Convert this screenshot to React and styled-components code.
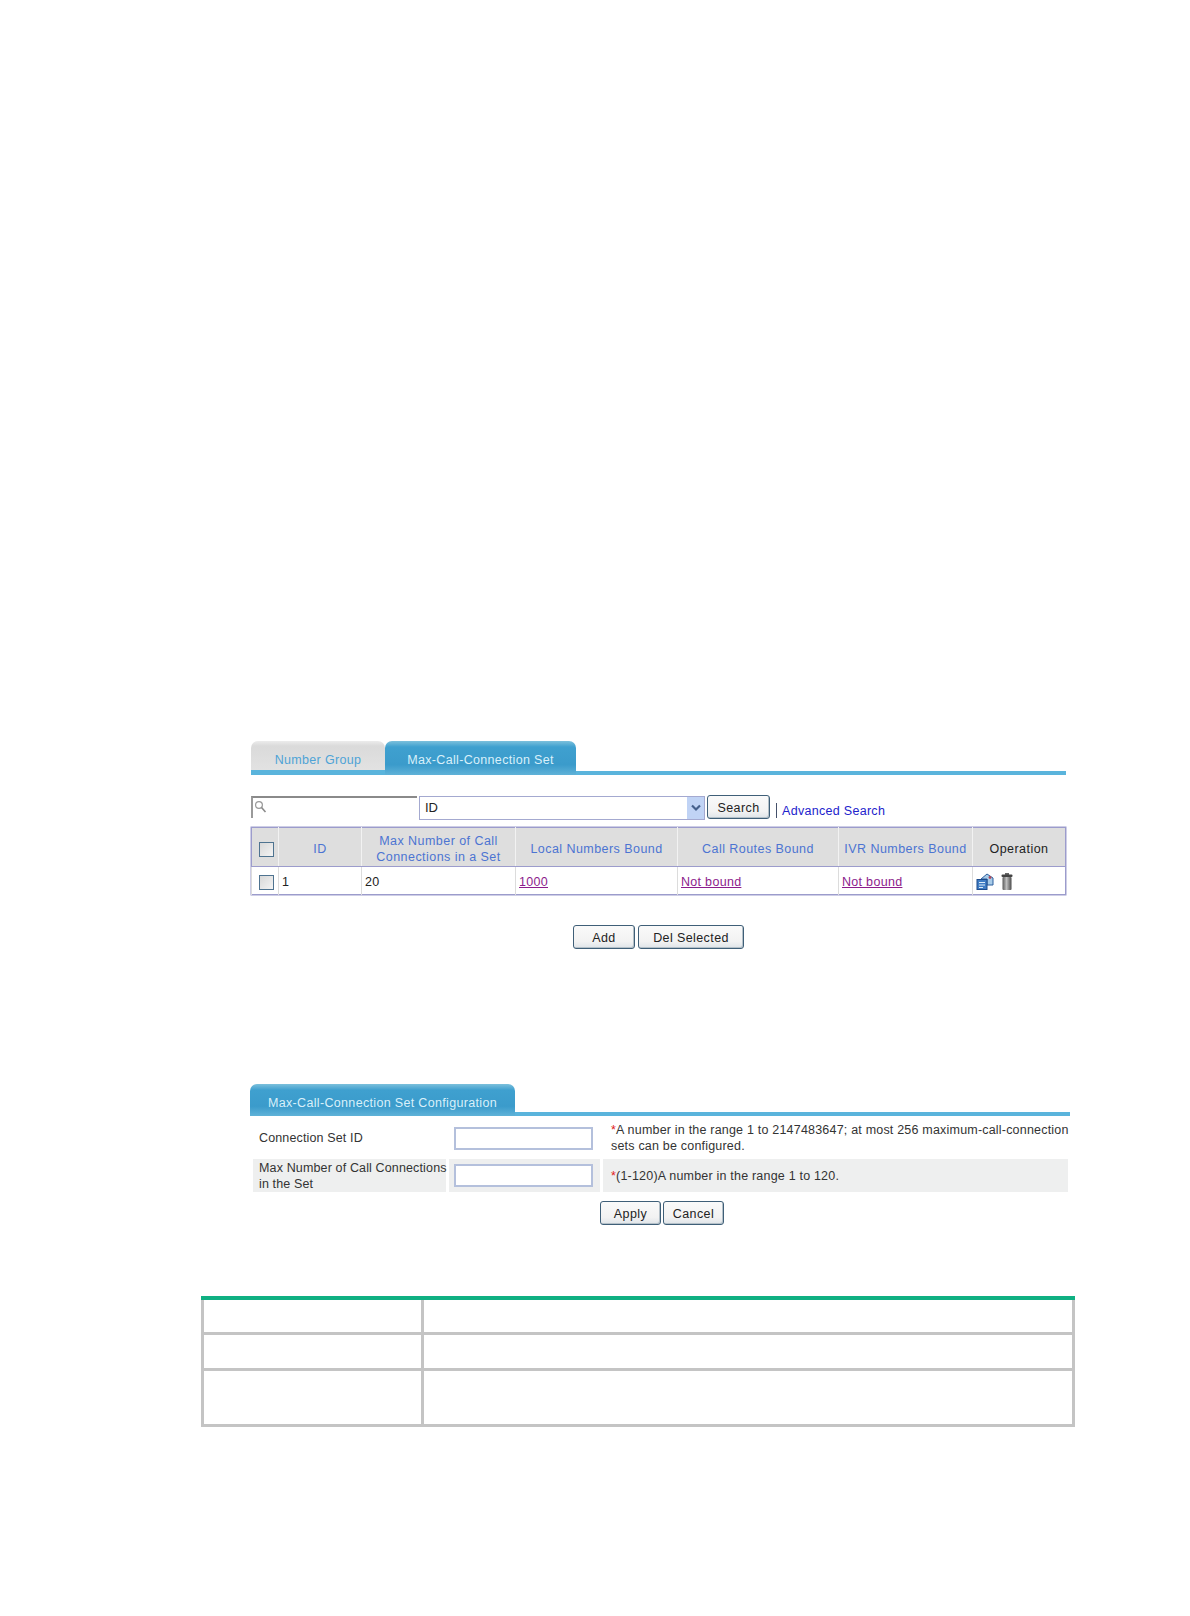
import React from 'react';
import styled, { createGlobalStyle } from 'styled-components';

const Global = createGlobalStyle`
  html, body { margin: 0; padding: 0; background: #fff; }
  body { font-family: "Liberation Sans", Arial, sans-serif; font-size: 12px; color: #222; }
`;

const Page = styled.div`
  width: 1190px;
  height: 1616px;
  padding-top: 741px;
  box-sizing: border-box;
  overflow: hidden;
`;

const Shot = styled.section`
  margin-left: ${(p) => p.left}px;
  margin-top: ${(p) => p.top || 0}px;
  width: ${(p) => p.width}px;
`;

const TabBar = styled.div`
  display: flex;
  align-items: flex-end;
  height: ${(p) => p.height}px;
  border-bottom: 4px solid #5ab4dc;
`;

const Tab = styled.div`
  width: ${(p) => p.width}px;
  height: ${(p) => p.height}px;
  margin-bottom: -4px;
  box-sizing: border-box;
  padding-top: ${(p) => p.pad}px;
  text-align: center;
  font-size: 12.5px;
  letter-spacing: 0.33px;
  border-radius: 7px 7px 0 0;
  color: ${(p) => (p.active ? '#d9f0fa' : '#4ea3d6')};
  background: ${(p) =>
    p.active
      ? 'linear-gradient(#7cc0dc 0, #3fa0cf 6px, #3b9bcb 70%, #5fb2d8 100%)'
      : 'linear-gradient(#ececec 0, #dadada 5px, #e2e2e2 85%, #5ab4dc 85%)'};
`;

const SearchRow = styled.div`
  display: flex;
  align-items: flex-start;
  margin-top: 20px;
  height: 32px;
`;

const SearchBox = styled.div`
  width: 166px;
  height: 22px;
  margin-top: 1px;
  box-sizing: border-box;
  border-top: 2px solid #8a8a8a;
  border-left: 2px solid #9a9a9a;
  padding: 2px 0 0 1px;
  svg { display: block; }
`;

const SelectBox = styled.div`
  display: flex;
  justify-content: space-between;
  width: 286px;
  height: 24px;
  margin: 1px 0 0 2px;
  box-sizing: border-box;
  border: 1px solid #a4a9d0;
  padding-left: 5px;
  line-height: 22px;
  font-size: 13px;
`;

const SelectArrow = styled.span`
  display: flex;
  align-items: center;
  justify-content: center;
  width: 17px;
  background: #c0d3f5;
`;

const Btn = styled.div`
  width: ${(p) => p.width}px;
  height: 24px;
  margin-left: ${(p) => p.gap || 0}px;
  box-sizing: border-box;
  border: 1px solid #3f5f78;
  border-radius: 3px;
  background: linear-gradient(#fafafa, #f2f2f2 70%, #dfe4e8);
  box-shadow: inset -1px -1px 0 #b4c0c8;
  text-align: center;
  line-height: 25px;
  font-size: 12.5px;
  letter-spacing: 0.4px;
  color: #222;
`;

const Sep = styled.span`
  width: 1px;
  height: 15px;
  margin: 8px 5px 0 6px;
  background: #44506a;
`;

const Advanced = styled.a`
  margin-top: 9px;
  color: #2222cc;
  font-size: 12.5px;
  letter-spacing: 0.3px;
  line-height: 15px;
`;

const DataTable = styled.table`
  width: 814px;
  table-layout: fixed;
  border-collapse: collapse;
  border: 1px solid #9c9ccc;
  box-shadow: 0 0 0 0.5px #9c9ccc;
`;

const Head = styled.th`
  height: 39px;
  box-sizing: border-box;
  padding: 4px 0 0 ${(p) => (p.first ? 2 : 0)}px;
  background: #dedede;
  border-left: 1px solid ${(p) => (p.first ? '#9c9ccc' : '#f2f2f2')};
  border-bottom: 1px solid #9c9ccc;
  font-weight: normal;
  font-size: 12.5px;
  letter-spacing: 0.45px;
  line-height: 16px;
  color: ${(p) => (p.plain ? '#222' : '#4c74d2')};
`;

const Cell = styled.td`
  height: 24px;
  padding: 3px 0 0 ${(p) => (p.tight ? 2 : 3)}px;
  border-left: 1px solid #dcdcdc;
  font-size: 12.5px;
  letter-spacing: 0.3px;
  vertical-align: middle;
`;

const Bound = styled.a`
  color: #8c1c8c;
  text-decoration: underline;
`;

const Check = styled.span`
  display: block;
  box-sizing: border-box;
  width: 15px;
  height: 15px;
  margin: 0 auto;
  border: 1px solid #4e7390;
  background: linear-gradient(135deg, #d8d8d8, #f4f4f4);
`;

const Ops = styled.div`
  display: flex;
  align-items: center;
  gap: 7px;
  margin-top: -2px;
  svg { display: block; }
`;

const Actions = styled.div`
  display: flex;
  justify-content: center;
  margin-top: ${(p) => p.top}px;
  padding-left: ${(p) => p.shift}px;
`;

const FormRow = styled.div`
  display: grid;
  grid-template-columns: 193px 151px 465px;
  column-gap: 3px;
  height: ${(p) => p.height}px;
  margin-left: 3px;
  margin-top: ${(p) => p.top || 0}px;
`;

const FormCell = styled.div`
  display: flex;
  align-items: center;
  background: ${(p) => (p.shade ? '#eeefef' : 'transparent')};
  padding-left: ${(p) => p.pad}px;
  font-size: 12.5px;
  letter-spacing: ${(p) => (p.label ? 0.14 : 0.2)}px;
  line-height: 16px;
  white-space: nowrap;
  color: #333;
`;

const Input = styled.div`
  width: 139px;
  height: 23px;
  box-sizing: border-box;
  border: 2px solid #b4c0dc;
  background: #fff;
`;

const Star = styled.span`
  color: #e02020;
`;

const NotesTable = styled.div`
  display: grid;
  grid-template-columns: 220px 654px;
  grid-template-rows: 32px 36px 56px;
  width: 874px;
  margin: 71px 0 0 201px;
  border-top: 4px solid #0fb082;
  border-bottom: 3px solid #c4c4c4;
`;

const NoteCell = styled.div`
  border-left: 3px solid #c4c4c4;
  border-right: ${(p) => (p.last ? '3px solid #c4c4c4' : 'none')};
  border-top: ${(p) => (p.top ? 'none' : '3px solid #c4c4c4')};
`;

const MagnifierIcon = () => (
  <svg width="13" height="14" viewBox="0 0 13 14">
    <circle cx="5" cy="5" r="3.4" fill="none" stroke="#9a9a9a" strokeWidth="1.2" />
    <path d="M7.5 7.5 L11.5 12" stroke="#8a8a8a" strokeWidth="1.6" />
  </svg>
);

const ChevronIcon = () => (
  <svg width="10" height="8" viewBox="0 0 10 8">
    <path d="M1 1.5 L5 5.5 L9 1.5" fill="none" stroke="#45608c" strokeWidth="2.2" />
  </svg>
);

const DetailIcon = () => (
  <svg width="18" height="17" viewBox="0 0 18 17">
    <path d="M5 6 L11 1 L17 5 V12 H11 V6 Z" fill="#a8cbe8" stroke="#2d5f9e" />
    <circle cx="14" cy="4.5" r="1.4" fill="#b04a5a" />
    <rect x="1" y="6.5" width="10" height="10" fill="#3f7cc4" stroke="#1c4a8a" />
    <path d="M3 9.5 H9 M3 12 H9 M3 14.5 H7" stroke="#dcecf8" />
  </svg>
);

const TrashIcon = () => (
  <svg width="12" height="17" viewBox="0 0 12 17">
    <defs>
      <linearGradient id="can" x1="0" x2="1" y1="0" y2="0">
        <stop offset="0" stopColor="#5a5a5a" />
        <stop offset="0.45" stopColor="#c0c0c0" />
        <stop offset="1" stopColor="#4a4a4a" />
      </linearGradient>
    </defs>
    <rect x="4" y="0" width="4" height="2" fill="#666" />
    <rect x="0.5" y="1.5" width="11" height="2.5" rx="1" fill="#444" />
    <rect x="1.5" y="4" width="9" height="13" rx="1" fill="url(#can)" />
  </svg>
);

export default function App() {
  return (
    <Page>
      <Global />
      <Shot left={251} width={815}>
        <TabBar height={30}>
          <Tab width={134} height={34} pad={12}>Number Group</Tab>
          <Tab active width={191} height={34} pad={12}>Max-Call-Connection Set</Tab>
        </TabBar>
        <SearchRow>
          <SearchBox><MagnifierIcon /></SearchBox>
          <SelectBox>
            ID
            <SelectArrow><ChevronIcon /></SelectArrow>
          </SelectBox>
          <Btn width={63} gap={2}>Search</Btn>
          <Sep />
          <Advanced>Advanced Search</Advanced>
        </SearchRow>
        <DataTable>
          <colgroup>
            <col width="27" />
            <col width="83" />
            <col width="154" />
            <col width="162" />
            <col width="161" />
            <col width="134" />
            <col width="93" />
          </colgroup>
          <thead>
            <tr>
              <Head first><Check /></Head>
              <Head>ID</Head>
              <Head>Max Number of Call<br />Connections in a Set</Head>
              <Head>Local Numbers Bound</Head>
              <Head>Call Routes Bound</Head>
              <Head>IVR Numbers Bound</Head>
              <Head plain>Operation</Head>
            </tr>
          </thead>
          <tbody>
            <tr>
              <Cell tight><Check /></Cell>
              <Cell>1</Cell>
              <Cell>20</Cell>
              <Cell><Bound>1000</Bound></Cell>
              <Cell><Bound>Not bound</Bound></Cell>
              <Cell><Bound>Not bound</Bound></Cell>
              <Cell>
                <Ops>
                  <DetailIcon />
                  <TrashIcon />
                </Ops>
              </Cell>
            </tr>
          </tbody>
        </DataTable>
        <Actions top={30} shift={0}>
          <Btn width={62}>Add</Btn>
          <Btn width={106} gap={3}>Del Selected</Btn>
        </Actions>
      </Shot>

      <Shot left={250} width={820} top={135}>
        <TabBar height={28}>
          <Tab active width={265} height={32} pad={12}>Max-Call-Connection Set Configuration</Tab>
        </TabBar>
        <FormRow height={42} top={1}>
          <FormCell label pad={6}>Connection Set ID</FormCell>
          <FormCell pad={5}><Input /></FormCell>
          <FormCell pad={8}>
            <span><Star>*</Star>A number in the range 1 to 2147483647; at most 256 maximum-call-connection<br />sets can be configured.</span>
          </FormCell>
        </FormRow>
        <FormRow height={33}>
          <FormCell label shade pad={6}>Max Number of Call Connections<br />in the Set</FormCell>
          <FormCell shade pad={5}><Input /></FormCell>
          <FormCell shade pad={8}>
            <span><Star>*</Star>(1-120)A number in the range 1 to 120.</span>
          </FormCell>
        </FormRow>
        <Actions top={9} shift={4}>
          <Btn width={61}>Apply</Btn>
          <Btn width={61} gap={2}>Cancel</Btn>
        </Actions>
      </Shot>

      <NotesTable>
        <NoteCell top />
        <NoteCell top last />
        <NoteCell />
        <NoteCell last />
        <NoteCell />
        <NoteCell last />
      </NotesTable>
    </Page>
  );
}
